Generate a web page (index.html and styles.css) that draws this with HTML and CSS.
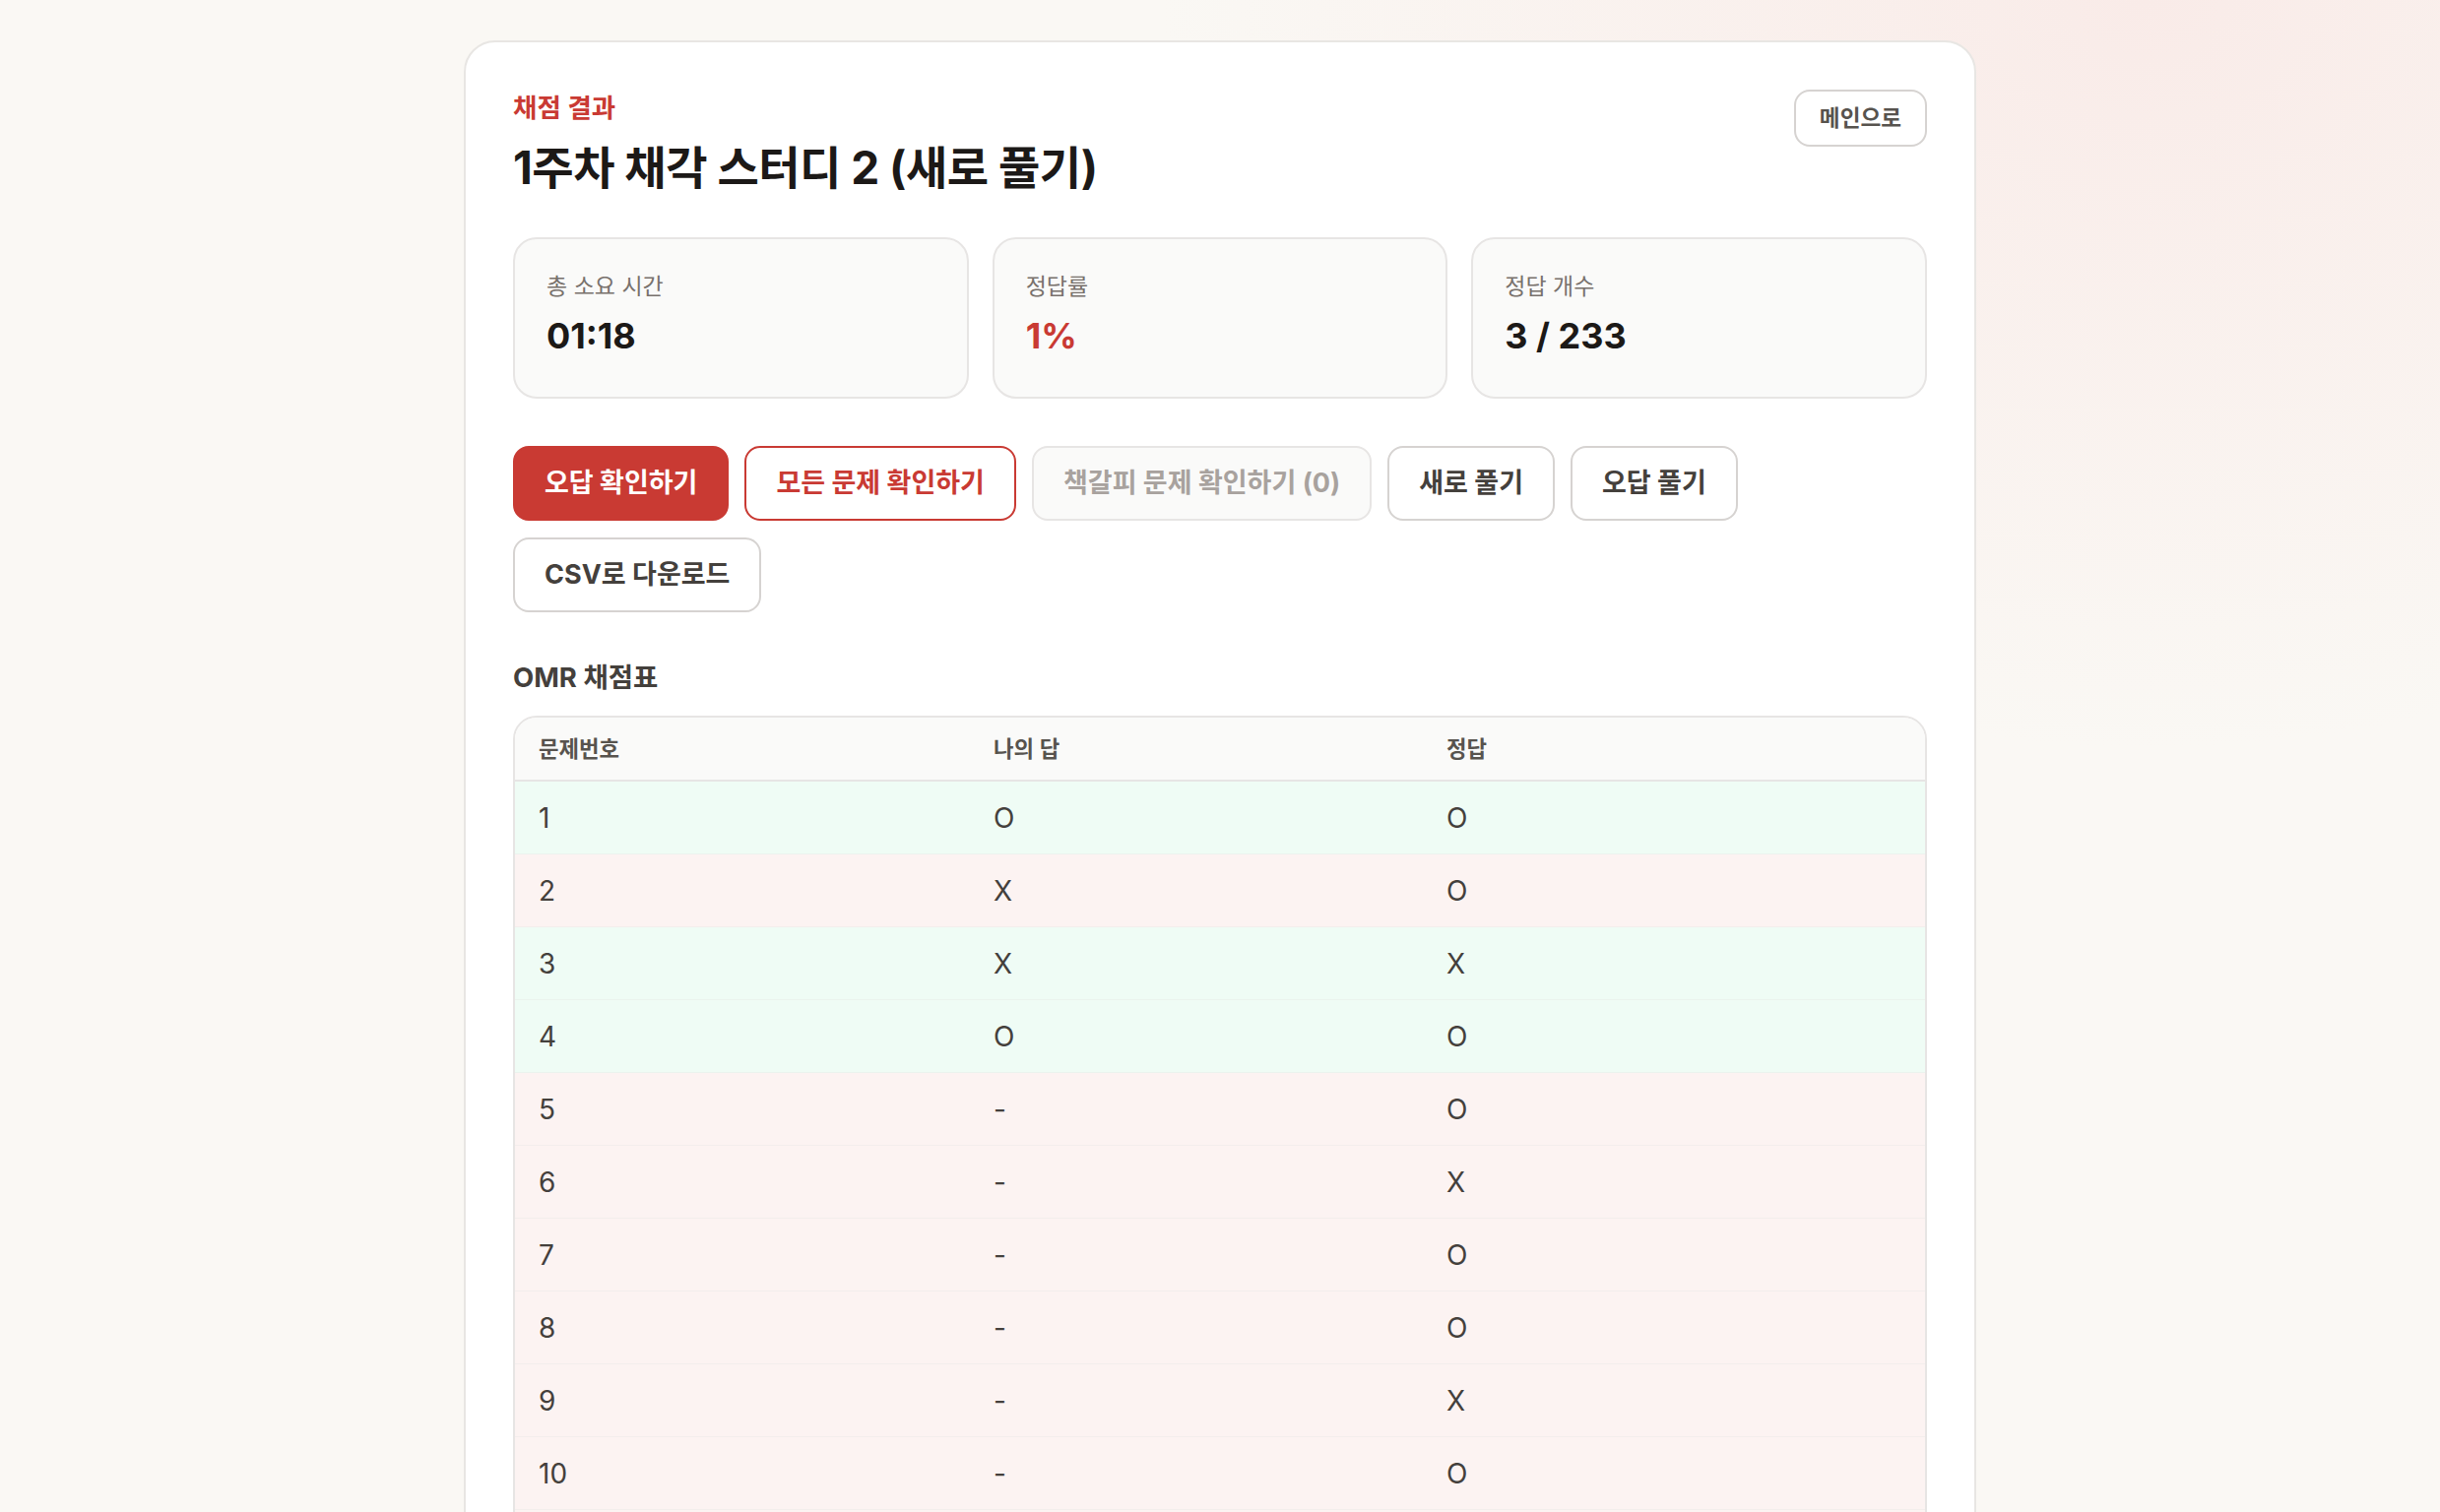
FILE: index.html
```html
<!DOCTYPE html>
<html lang="ko">
<head>
<meta charset="utf-8">
<title>채점 결과</title>
<link rel="stylesheet" href="styles.css">
</head>
<body>
<main class="card">
  <header class="head">
    <div class="head-text">
      <p class="eyebrow">채점 결과</p>
      <h1 class="title">1주차 채각 스터디 2 (새로 풀기)</h1>
    </div>
    <button class="btn-main">메인으로</button>
  </header>

  <section class="stats">
    <div class="stat">
      <div class="stat-label">총 소요 시간</div>
      <div class="stat-value">01:18</div>
    </div>
    <div class="stat">
      <div class="stat-label">정답률</div>
      <div class="stat-value red">1%</div>
    </div>
    <div class="stat">
      <div class="stat-label">정답 개수</div>
      <div class="stat-value">3 / 233</div>
    </div>
  </section>

  <div class="actions">
    <button class="btn btn-primary">오답 확인하기</button>
    <button class="btn btn-outline-red">모든 문제 확인하기</button>
    <button class="btn btn-disabled">책갈피 문제 확인하기 (0)</button>
    <button class="btn btn-plain">새로 풀기</button>
    <button class="btn btn-plain">오답 풀기</button>
    <button class="btn btn-plain">CSV로 다운로드</button>
  </div>

  <h2 class="section-title">OMR 채점표</h2>
  <div class="table-wrap">
    <table class="omr">
      <thead>
        <tr><th class="c1">문제번호</th><th class="c2">나의 답</th><th>정답</th></tr>
      </thead>
      <tbody>
        <tr class="ok"><td>1</td><td>O</td><td>O</td></tr>
        <tr class="ng"><td>2</td><td>X</td><td>O</td></tr>
        <tr class="ok"><td>3</td><td>X</td><td>X</td></tr>
        <tr class="ok"><td>4</td><td>O</td><td>O</td></tr>
        <tr class="ng"><td>5</td><td>-</td><td>O</td></tr>
        <tr class="ng"><td>6</td><td>-</td><td>X</td></tr>
        <tr class="ng"><td>7</td><td>-</td><td>O</td></tr>
        <tr class="ng"><td>8</td><td>-</td><td>O</td></tr>
        <tr class="ng"><td>9</td><td>-</td><td>X</td></tr>
        <tr class="ng"><td>10</td><td>-</td><td>O</td></tr>
        <tr class="ng"><td>11</td><td>-</td><td>X</td></tr>
        <tr class="ng"><td>12</td><td>-</td><td>O</td></tr>
      </tbody>
    </table>
  </div>
</main>
</body>
</html>
```

FILE: styles.css
```css
* { box-sizing: border-box; }

html, body { margin: 0; }

body {
  min-height: 100vh;
  padding: 41px 0 40px;
  font-family: Inter, "Noto Sans CJK KR", sans-serif;
  color: #1c1917;
  background:
    radial-gradient(ellipse 1000px 760px at 88% 0%, #f9ebe8 0%, rgba(249,235,232,0) 100%),
    #faf8f4;
}

.card {
  width: 1536px;
  margin: 0 auto;
  background: #ffffff;
  border: 2px solid #e8e6e3;
  border-radius: 32px;
  padding: 48px;
}

.head {
  display: flex;
  justify-content: space-between;
  align-items: flex-start;
}

.eyebrow {
  margin: 0;
  font-size: 26.5px;
  line-height: 36px;
  font-weight: 600;
  color: #c93a33;
}

.title {
  margin: 14px 0 0;
  font-size: 46px;
  line-height: 58px;
  font-weight: 700;
  color: #1c1917;
  letter-spacing: -0.5px;
}

.btn-main {
  font-family: inherit;
  font-size: 22.6px;
  line-height: 30px;
  font-weight: 600;
  color: #57534e;
  background: #ffffff;
  border: 2px solid #d6d3d1;
  border-radius: 16px;
  padding: 12px 24px;
}

.stats {
  display: grid;
  grid-template-columns: repeat(3, 1fr);
  gap: 24px;
  margin-top: 42px;
}

.stat {
  background: #fafaf9;
  border: 2px solid #e7e5e4;
  border-radius: 24px;
  padding: 32px 32px 40px;
}

.stat-label {
  font-size: 23px;
  line-height: 32px;
  color: #78716c;
}

.stat-value {
  margin-top: 12px;
  font-size: 36px;
  line-height: 44px;
  font-weight: 700;
  color: #1c1917;
}

.stat-value.red { color: #c93a33; }

.actions {
  display: flex;
  flex-wrap: wrap;
  gap: 17px 16px;
  margin-top: 48px;
}

.btn {
  font-family: inherit;
  font-size: 27px;
  line-height: 36px;
  font-weight: 700;
  padding: 18px 30px;
  border-radius: 16px;
  border: 2px solid #d6d3d1;
  background: #ffffff;
  color: #44403c;
}

.btn-primary {
  background: #c93a33;
  border-color: #c93a33;
  color: #ffffff;
}

.btn-outline-red {
  border-color: #c93a33;
  color: #c93a33;
}

.btn-disabled {
  background: #fafaf9;
  border-color: #e7e5e4;
  color: #a8a29e;
}

.section-title {
  margin: 47px 0 0;
  font-size: 27.5px;
  line-height: 38px;
  font-weight: 700;
  color: #44403c;
}

.table-wrap {
  margin-top: 20px;
  border: 2px solid #e7e5e4;
  border-radius: 24px;
  overflow: hidden;
}

.omr {
  width: 100%;
  border-collapse: collapse;
}

.omr th {
  text-align: left;
  font-size: 22.3px;
  line-height: 31px;
  font-weight: 600;
  color: #57534e;
  background: #fafaf9;
  padding: 16px 24px;
  border-bottom: 2px solid #e7e5e4;
}

.omr .c1 { width: 462px; }
.omr .c2 { width: 460px; }

.omr td {
  font-size: 28px;
  line-height: 40px;
  color: #44403c;
  padding: 16.5px 24px;
  border-bottom: 1px solid rgba(231, 229, 228, 0.4);
}

.omr tr.ok td { background: #effcf5; }
.omr tr.ng td { background: #fcf3f2; }
```
